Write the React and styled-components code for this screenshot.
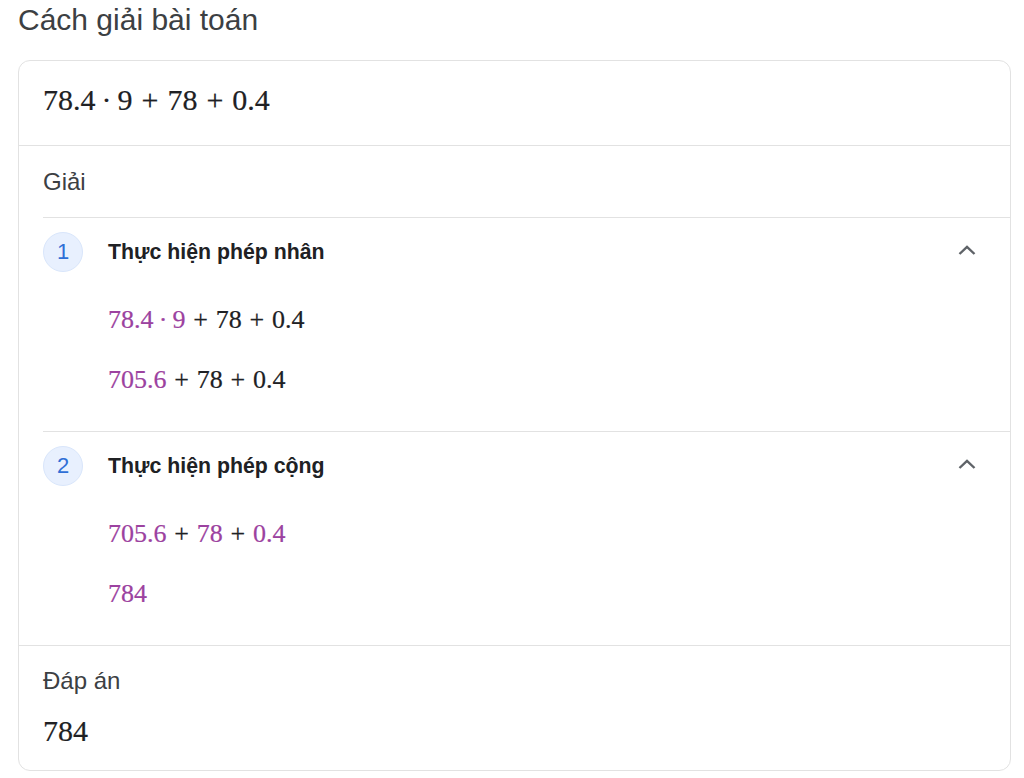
import React from 'react'
import styled, { createGlobalStyle } from 'styled-components'

const GlobalStyle = createGlobalStyle`
  body {
    margin: 0;
    background: #fff;
    font-family: "Liberation Sans", Arial, sans-serif;
  }
`

const steps = [
  {
    id: 1,
    title: 'Thực hiện phép nhân',
    lines: [
      [['78.4', true], ['·', true, 'dot'], ['9', true], ['+', false, 'op'], ['78', false], ['+', false, 'op'], ['0.4', false]],
      [['705.6', true], ['+', false, 'op'], ['78', false], ['+', false, 'op'], ['0.4', false]],
    ],
  },
  {
    id: 2,
    title: 'Thực hiện phép cộng',
    lines: [
      [['705.6', true], ['+', false, 'op'], ['78', true], ['+', false, 'op'], ['0.4', true]],
      [['784', true]],
    ],
  },
]

const ChevronUp = () => (
  <svg width="20" height="12" viewBox="0 0 20 12">
    <polyline points="2.5,10 10,2.8 17.5,10" fill="none" stroke="#5f6368" strokeWidth="2.4" />
  </svg>
)

const MathLine = ({ parts, size }) => (
  <Math size={size}>
    {parts.map(([text, hl, kind], i) =>
      kind
        ? <Op key={i} hl={hl} dot={kind === 'dot'}>{text}</Op>
        : <Num key={i} hl={hl}>{text}</Num>
    )}
  </Math>
)

const App = () => {
  return (
    <Page>
      <GlobalStyle />
      <Title>Cách giải bài toán</Title>
      <Card>
        <Problem>
          <MathLine size={30} parts={[['78.4'], ['·', false, 'dot'], ['9'], ['+', false, 'op'], ['78'], ['+', false, 'op'], ['0.4']]} />
        </Problem>
        <Solution>
          <Label>Giải</Label>
          {steps.map(step => (
            <Step key={step.id}>
              <StepHeader>
                <Badge>{step.id}</Badge>
                <StepTitle>{step.title}</StepTitle>
                <ChevronUp />
              </StepHeader>
              <StepBody>
                {step.lines.map((line, i) => (
                  <MathLine key={i} size={26} parts={line} />
                ))}
              </StepBody>
            </Step>
          ))}
        </Solution>
        <Answer>
          <Label>Đáp án</Label>
          <AnswerValue>
            <MathLine size={30} parts={[['784']]} />
          </AnswerValue>
        </Answer>
      </Card>
    </Page>
  )
}

export default App

const Page = styled.div`
  padding: 0 13px 0 18px;
`

const Title = styled.h2`
  margin: 0 0 20px;
  font-size: 30px;
  font-weight: normal;
  line-height: 40px;
  color: #3c4043;
`

const Card = styled.div`
  width: 993px;
  box-sizing: border-box;
  border: 1px solid #e2e2e2;
  border-radius: 12px;
  background: #fff;
`

const Problem = styled.div`
  padding: 19px 24px 25px;
  border-bottom: 1px solid #e2e2e2;
`

const Math = styled.div`
  font-family: "Liberation Serif", "Times New Roman", serif;
  font-size: ${p => p.size}px;
  line-height: 40px;
  color: #202124;
  white-space: nowrap;
  -webkit-text-stroke: 0.2px currentColor;
`

const Num = styled.span`
  color: ${p => (p.hl ? '#9c42a0' : '#202124')};
`

const Op = styled.span`
  margin: ${p => (p.dot ? '0 0.2em' : '0 0.3em')};
  color: ${p => (p.hl ? '#9c42a0' : '#202124')};
`

const Solution = styled.div`
  padding: 20px 0 0 24px;
`

const Label = styled.div`
  font-size: 24px;
  line-height: 32px;
  color: #3c4043;
`

const Step = styled.div`
  border-top: 1px solid #e2e2e2;
  margin-top: 19px;
  padding: 14px 33px 31px 0;

  & + & {
    margin-top: 0;
  }
`

const StepHeader = styled.div`
  display: flex;
  align-items: center;
  gap: 25px;

  svg {
    margin-left: auto;
    margin-top: -4px;
  }
`

const Badge = styled.div`
  width: 40px;
  height: 40px;
  box-sizing: border-box;
  border-radius: 50%;
  background: #e8f0fe;
  border: 1px solid #d9e6fb;
  color: #2f6fd6;
  font-size: 22px;
  display: flex;
  align-items: center;
  justify-content: center;
  flex-shrink: 0;
`

const StepTitle = styled.div`
  font-size: 21.3px;
  font-weight: bold;
  color: #202124;
`

const StepBody = styled.div`
  margin-top: 28px;
  padding-left: 65px;
  display: flex;
  flex-direction: column;
  gap: 20px;
`

const Answer = styled.div`
  border-top: 1px solid #e2e2e2;
  padding: 19px 24px 19px;
`

const AnswerValue = styled.div`
  margin-top: 14px;
`
